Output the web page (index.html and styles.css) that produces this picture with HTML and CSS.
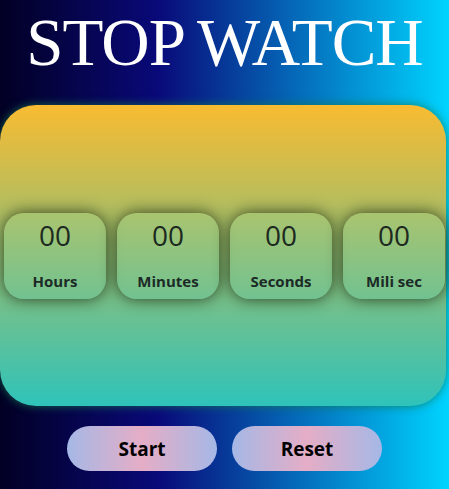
FILE: index.html
```html
<!DOCTYPE html>
<html>
<head>
<meta charset="utf-8">
<link rel="stylesheet" href="styles.css">
</head>
<body>
<h1 class="title">STOP WATCH</h1>
<div class="panel">
  <div class="unit"><span class="num">00</span><span class="label">Hours</span></div>
  <div class="unit"><span class="num">00</span><span class="label">Minutes</span></div>
  <div class="unit"><span class="num">00</span><span class="label">Seconds</span></div>
  <div class="unit"><span class="num">00</span><span class="label">Mili sec</span></div>
</div>
<div class="controls">
  <button class="btn">Start</button>
  <button class="btn">Reset</button>
</div>
</body>
</html>
```
FILE: styles.css
```css
html, body {
  margin: 0;
  padding: 0;
}
body {
  width: 449px;
  height: 489px;
  overflow: hidden;
  background: linear-gradient(90deg, #020024 0%, #090979 35%, #00d4ff 100%);
  font-family: "Open Sans", "Noto Sans", sans-serif;
}
.title {
  margin: 0;
  padding-top: 4px;
  height: 101px;
  box-sizing: border-box;
  text-align: center;
  color: #ffffff;
  font-family: "Liberation Serif", serif;
  font-weight: 400;
  font-size: 67px;
  letter-spacing: -1px;
  line-height: 76px;
}
.panel {
  margin: 4px 3px 0 0;
  height: 301px;
  border-radius: 36px;
  background: linear-gradient(180deg, #f8bb31 0%, #2fc3ba 100%);
  box-shadow: 0 0 10px rgba(20, 120, 80, 0.85);
  display: flex;
  align-items: center;
  gap: 11px;
  padding-left: 4px;
  box-sizing: border-box;
}
.unit {
  width: 102px;
  height: 86px;
  border-radius: 20px;
  background: linear-gradient(180deg, rgba(165, 200, 120, 0.6), rgba(110, 195, 150, 0.6));
  box-shadow: 0 0 16px rgba(25, 40, 15, 0.85);
  display: flex;
  flex-direction: column;
  align-items: center;
  box-sizing: border-box;
  padding-top: 4px;
}
.num {
  font-weight: 400;
  font-size: 28px;
  line-height: 36px;
  color: #1c2a20;
}
.label {
  margin-top: 18px;
  font-weight: 700;
  font-size: 15px;
  line-height: 20px;
  color: #1c2a26;
}
.controls {
  display: flex;
  justify-content: center;
  gap: 15px;
  margin-top: 20px;
}
.btn {
  width: 150px;
  height: 45px;
  border: none;
  border-radius: 23px;
  background: linear-gradient(90deg, #a5b8e6 0%, #e5adc6 50%, #a5b8e6 100%);
  font-family: "Open Sans", "Noto Sans", sans-serif;
  font-weight: 700;
  font-size: 19px;
  color: #000000;
  padding: 0;
}
```
